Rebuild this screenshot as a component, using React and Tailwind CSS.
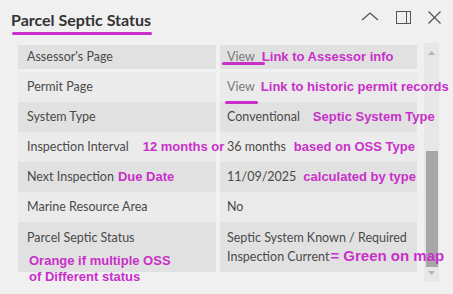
import React from "react";

const ann = "relative z-10 font-['Liberation_Sans','Arial',sans-serif] font-bold text-[13px] text-[#c92fc9] leading-[13px] whitespace-nowrap";
const uline = "absolute h-[3px] rounded-full bg-[#c92fc9]";

function Row({ dark, h = "h-[30px]", left, right, align = "items-center" }) {
  const bg = dark ? "bg-[#e1e1e1]" : "bg-[#ebebeb]";
  return (
    <div className={`flex ${h}`}>
      <div className={`w-[198px] shrink-0 ${bg} flex ${align} pl-[9px] whitespace-nowrap`}>{left}</div>
      <div className="w-[4px] shrink-0 bg-[#f2f2f2]" />
      <div className={`min-w-0 flex-1 ${bg} flex ${align} pl-[7px] whitespace-nowrap`}>{right}</div>
    </div>
  );
}

function View({ ul }) {
  return (
    <span className="relative text-[#7a7a7a]">
      View
      <span className={ul} />
    </span>
  );
}

export default function App() {
  return (
    <div className="relative w-[453px] h-[294px] overflow-hidden bg-[#f0f0f0] font-['Lato',sans-serif] text-[12.5px] text-[#4a4a4a]">
      <div className="flex h-[45px] items-start justify-between">
        <div className="pl-[11px] pt-[8px]">
          <div className="text-[16px] leading-[24px] font-bold text-[#333]">Parcel Septic Status</div>
          <div className="ml-[1px] h-[3px] w-[140px] rounded-full bg-[#c92fc9]" />
        </div>
        <div className="flex items-center gap-[17px] pr-[12px] pt-[10px]">
          <svg width="18" height="14" viewBox="0 0 18 14">
            <polyline points="1,10 9,3 17,10" fill="none" stroke="#555" strokeWidth="1.3" />
          </svg>
          <svg width="15" height="13" viewBox="0 0 15 13">
            <rect x="0.5" y="0.5" width="14" height="12" fill="none" stroke="#555" strokeWidth="1" />
            <line x1="10.5" y1="0.5" x2="10.5" y2="12.5" stroke="#555" strokeWidth="1" />
          </svg>
          <svg width="13" height="13" viewBox="0 0 13 13">
            <line x1="0.5" y1="0.5" x2="12.5" y2="12.5" stroke="#555" strokeWidth="1.2" />
            <line x1="12.5" y1="0.5" x2="0.5" y2="12.5" stroke="#555" strokeWidth="1.2" />
          </svg>
        </div>
      </div>

      <div className="flex gap-[7px] pl-[18px]">
        <div className="w-[399px]">
          <Row
            dark
            h="h-[27px] pb-[3px]"
            left="Assessor's Page"
            right={
              <span>
                <View ul={`${uline} -left-[5px] top-[13px] w-[43px]`} />
                <span className={`${ann} ml-[7px]`}>Link to Assessor info</span>
              </span>
            }
          />
          <Row
            left="Permit Page"
            right={
              <span>
                <View ul={`${uline} -left-[2px] top-[22px] w-[33px]`} />
                <span className={`${ann} ml-[6px]`}>Link to historic permit records</span>
              </span>
            }
          />
          <Row
            dark
            left="System Type"
            right={
              <span>
                Conventional<span className={`${ann} ml-[13px]`}>Septic System Type</span>
              </span>
            }
          />
          <Row
            left={
              <span>
                Inspection Interval<span className={`${ann} ml-[14px]`}>12 months or</span>
              </span>
            }
            right={
              <span>
                36 months<span className={`${ann} ml-[8px]`}>based on OSS Type</span>
              </span>
            }
          />
          <Row
            dark
            left={
              <span>
                Next Inspection<span className={`${ann} ml-[4px]`}>Due Date</span>
              </span>
            }
            right={
              <span>
                11/09/2025<span className={`${ann} ml-[7px]`}>calculated by type</span>
              </span>
            }
          />
          <Row left="Marine Resource Area" right={<span>No</span>} />
          <Row
            dark
            h="h-[50px]"
            align="items-start pt-[6px]"
            left={
              <div className="flex flex-col">
                <div className="leading-[19px]">Parcel Septic Status</div>
                <div className={`${ann} ml-[2px] mt-[6px] text-[13.5px] leading-[16px]`}>
                  <div>Orange if multiple OSS</div>
                  <div>of Different status</div>
                </div>
              </div>
            }
            right={
              <div className="leading-[19px]">
                <div>Septic System Known / Required</div>
                <div>
                  Inspection Current<span className={`${ann} ml-[1px] text-[15px]`}>= Green on map</span>
                </div>
              </div>
            }
          />
        </div>

        <div className="relative -mt-[2px] flex h-[239px] w-[15px] flex-col items-center bg-[#e7e7e7] pt-[8px] pb-[7px]">
          <svg width="7" height="4" viewBox="0 0 7 4">
            <polygon points="0,4 3.5,0 7,4" fill="#b5b5b5" />
          </svg>
          <div className="mt-[96px] h-[116px] w-[12px] bg-[#a7a7a7]" />
          <svg className="mt-[4px]" width="7" height="4" viewBox="0 0 7 4">
            <polygon points="0,0 3.5,4 7,0" fill="#b5b5b5" />
          </svg>
        </div>
      </div>
    </div>
  );
}
